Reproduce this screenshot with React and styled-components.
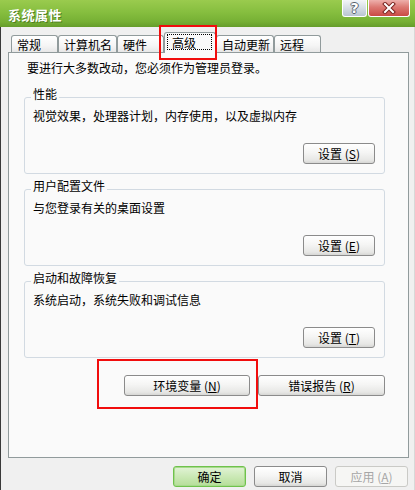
import React from 'react';
import styled, { createGlobalStyle, css } from 'styled-components';

const tabs = [
  { label: '常规', width: 47 },
  { label: '计算机名', width: 59 },
  { label: '硬件', width: 47 },
  { label: '高级', width: 52, active: true },
  { label: '自动更新', width: 58 },
  { label: '远程', width: 47 },
];

const groups = [
  { title: '性能', desc: '视觉效果，处理器计划，内存使用，以及虚拟内存', hotkey: 'S' },
  { title: '用户配置文件', desc: '与您登录有关的桌面设置', hotkey: 'E' },
  { title: '启动和故障恢复', desc: '系统启动，系统失败和调试信息', hotkey: 'T' },
];

const GlobalStyle = createGlobalStyle`
  html, body {
    margin: 0;
    padding: 0;
    background: #f0f0f0;
  }
  body {
    font-family: 'Noto Sans CJK SC', 'Liberation Sans', sans-serif;
    font-size: 12px;
    color: #000;
  }
`;

const Window = styled.div`
  width: 415px;
  height: 490px;
  display: flex;
  flex-direction: column;
  background: #f0f0f0;
  overflow: hidden;
`;

const TitleBar = styled.div`
  height: 27px;
  flex-shrink: 0;
  display: flex;
  justify-content: space-between;
  align-items: flex-start;
  padding-left: 8px;
  background: linear-gradient(#9acb4e, #86be3f 45%, #76b034 80%, #659d2b);
`;

const Title = styled.span`
  color: #fff;
  font-weight: bold;
  font-size: 13px;
  line-height: 29px;
  letter-spacing: 0.5px;
  text-shadow: 1px 1px 0 #4f7f22;
`;

const Controls = styled.div`
  display: flex;
  gap: 1px;
  margin-right: 5px;
`;

const CaptionButton = styled.div`
  box-sizing: border-box;
  width: ${(p) => p.$w}px;
  height: 17px;
  display: flex;
  align-items: center;
  justify-content: center;
  border: 1px solid #fff;
  border-top: none;
  border-radius: 0 0 3px 3px;
  ${(p) =>
    p.$close
      ? css`
          background: linear-gradient(#eeb0ac, #dc7872 45%, #c94a44);
        `
      : css`
          background: linear-gradient(#f4f6f8, #d9e0e7 45%, #b9c5d1);
        `}
`;

const HelpGlyph = styled.span`
  font-family: 'DejaVu Sans', sans-serif;
  font-weight: bold;
  font-size: 14px;
  line-height: 14px;
  color: #fff;
  text-shadow: -1px 0 #59636d, 1px 0 #59636d, 0 -1px #59636d, 0 1px #59636d;
`;

const Body = styled.div`
  flex: 1;
  display: flex;
  flex-direction: column;
  padding: 5px 5px 0 7px;
  border-left: 1px solid #3a3a3a;
  border-right: 1px solid #d8d8d8;
`;

const TabStrip = styled.div`
  display: flex;
  align-items: flex-end;
  height: 20px;
  padding-left: 3px;
`;

const Tab = styled.div`
  position: relative;
  box-sizing: border-box;
  width: ${(p) => p.$w}px;
  height: 17px;
  padding: 1px 0 0 5px;
  border: 1px solid #919b9c;
  border-bottom: none;
  border-radius: 3px 3px 0 0;
  background: linear-gradient(#ffffff, #f5f5f5 60%, #e7e7e7);
  line-height: 15px;
  white-space: nowrap;

  ${(p) =>
    p.$active &&
    css`
      height: 21px;
      margin-bottom: -1px;
      z-index: 2;
      padding: 1px 3px 3px 2px;
      background: #fafafa;

      &::after {
        content: '';
        position: absolute;
        left: -6px;
        right: -2px;
        top: -8px;
        bottom: -7px;
        border: 2px solid #f10d0d;
        pointer-events: none;
      }
    `}
`;

const FocusLabel = styled.span`
  display: block;
  height: 100%;
  box-sizing: border-box;
  border: 1px dotted #000;
  padding: 1px 0 0 4px;
  line-height: 13px;
`;

const Panel = styled.div`
  height: 406px;
  box-sizing: border-box;
  display: flex;
  flex-direction: column;
  border: 1px solid #919b9c;
  background: #fafafa;
  padding: 8px 23px 0 15px;
`;

const Note = styled.p`
  margin: 0 0 12px 3px;
  line-height: 14px;
`;

const GroupBox = styled.fieldset`
  margin: 0 0 5px;
  min-width: 0;
  display: flex;
  flex-direction: column;
  border: 1px solid #d2dae2;
  border-radius: 3px;
  padding: 2px 9px 9px 8px;
`;

const Legend = styled.legend`
  margin-left: -2px;
  padding: 0 2px 6px;
  line-height: 14px;
`;

const Desc = styled.div`
  line-height: 14px;
`;

const Button = styled.button`
  box-sizing: border-box;
  width: ${(p) => p.$w}px;
  height: 21px;
  padding: 0;
  font: inherit;
  font-size: 12px;
  line-height: 14px;
  color: #000;
  border: 1px solid #8b8b8b;
  border-radius: 3px;
  background: linear-gradient(#ffffff, #f5f5f4 45%, #e7e7e5 85%, #d6d6d4);
  white-space: nowrap;

  ${(p) =>
    p.$default &&
    css`
      border-color: #6fc24c;
      box-shadow: inset 0 0 0 1px #a7da8c;
      background: linear-gradient(#e2f3d6, #cbe9b6 50%, #b5de99);
    `}

  &:disabled {
    border-color: #cacac6;
    background: #f6f6f4;
    color: #a6a6a6;
  }
`;

const GroupAction = styled(Button)`
  align-self: flex-end;
  margin-top: 20px;
`;

const ButtonRow = styled.div`
  display: flex;
  justify-content: flex-end;
  gap: 8px;
  margin-top: 12px;
`;

const Marked = styled.div`
  position: relative;
  display: flex;

  &::after {
    content: '';
    position: absolute;
    left: -27px;
    right: -8px;
    top: -16px;
    bottom: -13px;
    border: 2px solid #f10d0d;
    pointer-events: none;
  }
`;

const Footer = styled.div`
  display: flex;
  justify-content: flex-end;
  gap: 8px;
  padding-top: 8px;
  margin-right: 1px;
`;

const Hotkey = ({ label, k }) => (
  <>
    {label} (<u>{k}</u>)
  </>
);

const CloseIcon = () => (
  <svg width="14" height="12" viewBox="0 0 14 12">
    <path d="M3 2 L11 10 M11 2 L3 10" stroke="#7a2420" strokeWidth="4" strokeLinecap="square" />
    <path d="M3 2 L11 10 M11 2 L3 10" stroke="#fff" strokeWidth="2" strokeLinecap="square" />
  </svg>
);

export default function App() {
  return (
    <Window>
      <GlobalStyle />
      <TitleBar>
        <Title>系统属性</Title>
        <Controls>
          <CaptionButton $w={25}>
            <HelpGlyph>?</HelpGlyph>
          </CaptionButton>
          <CaptionButton $w={42} $close>
            <CloseIcon />
          </CaptionButton>
        </Controls>
      </TitleBar>
      <Body>
        <TabStrip>
          {tabs.map(({ label, width, active }) => (
            <Tab key={label} $w={width} $active={active}>
              {active ? <FocusLabel>{label}</FocusLabel> : label}
            </Tab>
          ))}
        </TabStrip>
        <Panel>
          <Note>要进行大多数改动，您必须作为管理员登录。</Note>
          {groups.map(({ title, desc, hotkey }) => (
            <GroupBox key={title}>
              <Legend>{title}</Legend>
              <Desc>{desc}</Desc>
              <GroupAction $w={72}>
                <Hotkey label="设置" k={hotkey} />
              </GroupAction>
            </GroupBox>
          ))}
          <ButtonRow>
            <Marked>
              <Button $w={126}>
                <Hotkey label="环境变量" k="N" />
              </Button>
            </Marked>
            <Button $w={127}>
              <Hotkey label="错误报告" k="R" />
            </Button>
          </ButtonRow>
        </Panel>
        <Footer>
          <Button $w={73} $default>
            确定
          </Button>
          <Button $w={73}>取消</Button>
          <Button $w={73} disabled>
            <Hotkey label="应用" k="A" />
          </Button>
        </Footer>
      </Body>
    </Window>
  );
}
